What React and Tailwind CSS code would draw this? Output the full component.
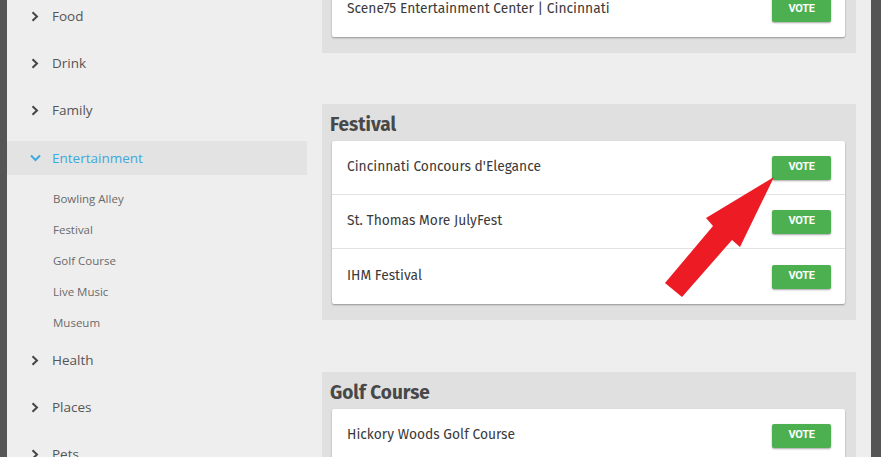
import React from "react";

const sideFont = { fontFamily: '"Open Sans", "Noto Sans", sans-serif' };

function ChevronRight() {
  return (
    <svg width="8" height="11" viewBox="0 0 8 11" className="shrink-0">
      <path d="M1.5 1.2 L6 5.5 L1.5 9.8" fill="none" stroke="#444" strokeWidth="2" />
    </svg>
  );
}

function ChevronDown() {
  return (
    <svg width="11" height="8" viewBox="0 0 11 8" className="shrink-0">
      <path d="M1 1.5 L5.5 6 L10 1.5" fill="none" stroke="#3ea9dc" strokeWidth="2" />
    </svg>
  );
}

function MainItem({ label, active, className = "" }) {
  return (
    <div
      className={`flex items-center h-[34px] ${active ? "bg-[#e3e3e3]" : ""} ${className}`}
    >
      <div className="w-[45px] flex justify-end pr-[13px]">
        {active ? (
          <span className="mr-[-2px]"><ChevronDown /></span>
        ) : (
          <ChevronRight />
        )}
      </div>
      <span
        className={`text-[13.5px] ${active ? "text-[#3ea9dc]" : "text-[#555]"}`}
      >
        {label}
      </span>
    </div>
  );
}

function SubItem({ label }) {
  return (
    <div className="h-[31px] flex items-center pl-[46px] text-[11.5px] text-[#6a6a6a]">
      {label}
    </div>
  );
}

function VoteButton() {
  return (
    <button
      className="w-[59px] h-[24px] rounded-[2px] bg-[#4caf50] text-white text-[11px] font-bold tracking-[-0.3px] shadow-[0_1px_2px_rgba(0,0,0,0.35)] flex items-center justify-center"
      style={{ fontFamily: 'Roboto, "Liberation Sans", sans-serif' }}
    >
      VOTE
    </button>
  );
}

function Row({ name, last }) {
  return (
    <div
      className={`flex items-center justify-between pl-[15px] pr-[14px] ${
        last ? "h-[55px]" : "h-[54px] border-b border-[#e2e2e2]"
      }`}
    >
      <span className="text-[13.8px] text-[#3a3a3a]">{name}</span>
      <VoteButton />
    </div>
  );
}

function Panel({ title, items, className = "" }) {
  return (
    <div className={`bg-[#e0e0e0] pl-[10px] pr-[11px] pt-[7px] pb-[16px] ${className}`}>
      {title && (
        <div className="h-[28px] leading-[28px] mb-[2px] ml-[-2px] text-[19px] font-bold text-[#484848]">
          {title}
        </div>
      )}
      <div className="bg-white rounded-[2px] shadow-[0_1px_2px_rgba(0,0,0,0.35)]">
        {items.map((it, i) => (
          <Row key={it} name={it} last={i === items.length - 1} />
        ))}
      </div>
    </div>
  );
}

export default function App() {
  return (
    <div className="relative w-[881px] h-[457px] overflow-hidden bg-[#eeeeee] flex">
      <div className="w-[7px] h-full bg-[#555555] shrink-0" />
      <div className="w-[300px] shrink-0 mt-[-1px]" style={sideFont}>
        <MainItem label="Food" className="mb-[13px]" />
        <MainItem label="Drink" className="mb-[13px]" />
        <MainItem label="Family" className="mb-[14px]" />
        <MainItem label="Entertainment" active />
        <div className="pt-[8px]">
          <SubItem label="Bowling Alley" />
          <SubItem label="Festival" />
          <SubItem label="Golf Course" />
          <SubItem label="Live Music" />
          <SubItem label="Museum" />
        </div>
        <MainItem label="Health" className="mt-[5px] mb-[13px]" />
        <MainItem label="Places" className="mb-[13px]" />
        <MainItem label="Pets" />
      </div>
      <div
        className="ml-[15px] w-[534px] shrink-0 flex flex-col"
        style={{ fontFamily: '"Fira Sans", "PT Sans", Lato, "Noto Sans", sans-serif' }}
      >
        <Panel
          className="mt-[-55px]"
          title="Entertainment Center"
          items={["Scene75 Entertainment Center | Cincinnati"]}
        />
        <Panel
          className="mt-[51px]"
          title="Festival"
          items={[
            "Cincinnati Concours d'Elegance",
            "St. Thomas More JulyFest",
            "IHM Festival",
          ]}
        />
        <Panel
          className="mt-[52px]"
          title="Golf Course"
          items={["Hickory Woods Golf Course", "Glenview Golf Course"]}
        />
      </div>
      <div className="ml-auto w-[10px] h-full bg-[#555555] shrink-0" />
      <svg
        className="absolute left-0 top-0 pointer-events-none"
        width="881"
        height="457"
        viewBox="0 0 881 457"
      >
        <polygon
          points="774,177 740,247 732,240 682,297 665,283 713,226 706,218"
          fill="#ed1c24"
        />
      </svg>
    </div>
  );
}
